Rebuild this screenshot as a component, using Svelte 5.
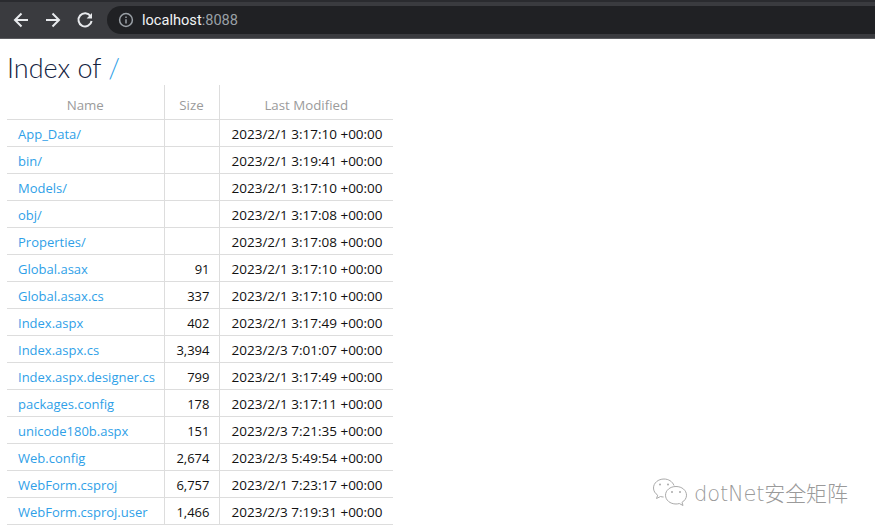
<script>
	let files = [
		{ name: "App_Data/", size: "", date: "2023/2/1 3:17:10 +00:00" },
		{ name: "bin/", size: "", date: "2023/2/1 3:19:41 +00:00" },
		{ name: "Models/", size: "", date: "2023/2/1 3:17:10 +00:00" },
		{ name: "obj/", size: "", date: "2023/2/1 3:17:08 +00:00" },
		{ name: "Properties/", size: "", date: "2023/2/1 3:17:08 +00:00" },
		{ name: "Global.asax", size: "91", date: "2023/2/1 3:17:10 +00:00" },
		{ name: "Global.asax.cs", size: "337", date: "2023/2/1 3:17:10 +00:00" },
		{ name: "Index.aspx", size: "402", date: "2023/2/1 3:17:49 +00:00" },
		{ name: "Index.aspx.cs", size: "3,394", date: "2023/2/3 7:01:07 +00:00" },
		{ name: "Index.aspx.designer.cs", size: "799", date: "2023/2/1 3:17:49 +00:00" },
		{ name: "packages.config", size: "178", date: "2023/2/1 3:17:11 +00:00" },
		{ name: "unicode180b.aspx", size: "151", date: "2023/2/3 7:21:35 +00:00" },
		{ name: "Web.config", size: "2,674", date: "2023/2/3 5:49:54 +00:00" },
		{ name: "WebForm.csproj", size: "6,757", date: "2023/2/1 7:23:17 +00:00" },
		{ name: "WebForm.csproj.user", size: "1,466", date: "2023/2/3 7:19:31 +00:00" },
	];
</script>

<div class="page">
	<div class="toolbar">
		<div class="nav">
			<svg width="18" height="18" viewBox="0 0 18 18"><path d="M16 9H3M9.500 2.500L3 9l6.500 6.500" /></svg>
			<svg width="18" height="18" viewBox="0 0 18 18"><path d="M2 9h13M8.500 2.500L15 9l-6.500 6.500" /></svg>
			<svg width="18" height="18" viewBox="0 0 18 18"><path d="M14.600 5.200A6.600 6.600 0 1 0 15.600 10" /><path class="fill" d="M16 2v5.400h-5.400z" /></svg>
		</div>
		<div class="address">
			<svg width="16" height="16" viewBox="0 0 16 16"><circle cx="8" cy="8" r="6.400" /><path d="M8 7.200v4.400M8 4.400v1.600" /></svg>
			<span class="host">localhost<span class="port">:8088</span></span>
		</div>
	</div>

	<div class="content">
		<h1>Index of <a href="#root">/</a></h1>
		<table>
			<thead>
				<tr>
					<th class="name">Name</th>
					<th class="size">Size</th>
					<th class="date">Last Modified</th>
				</tr>
			</thead>
			<tbody>
				{#each files as f}
					<tr>
						<td class="name"><a href="#file">{f.name}</a></td>
						<td class="size">{f.size}</td>
						<td class="date">{f.date}</td>
					</tr>
				{/each}
			</tbody>
		</table>
	</div>

	<div class="watermark">
		<svg width="36" height="30" viewBox="0 0 36 30">
			<path d="M22 8.500C20.500 4.500 16.500 2 12 2 6.200 2 1.500 6 1.500 11c0 3 1.700 5.500 4.200 7.200L4.500 21.500l4-2c1 .3 2 .5 3.100 .5" />
			<path d="M24 9.500c-6 0-10.500 3.900-10.500 8.700S18 27 24 27c1.200 0 2.300-.2 3.300-.5l3.700 2-1-3.200c2.800-1.600 4.500-4.200 4.500-7.100 0-4.800-4.500-8.700-10.500-8.700z" />
			<circle cx="8" cy="7.500" r="1" /><circle cx="16" cy="7.500" r="1" />
			<circle cx="20" cy="15" r="1" /><circle cx="28" cy="15" r="1" />
		</svg>
		<span>dotNet安全矩阵</span>
	</div>
</div>

<style>
	:global(body) {
		margin: 0;
		background: #fff;
	}
	.page {
		position: relative;
		width: 875px;
		height: 532px;
		overflow: hidden;
		font-family: "Open Sans", "Noto Sans", sans-serif;
	}
	.toolbar {
		height: 39px;
		box-sizing: border-box;
		background: #3a3b3f;
		border-top: 2px solid #2a2b2f;
		border-bottom: 1px solid #5a5b5f;
		display: flex;
		align-items: center;
		padding-left: 12px;
	}
	.nav {
		display: flex;
		gap: 14px;
	}
	.nav svg path {
		fill: none;
		stroke: #e8eaed;
		stroke-width: 2;
	}
	.nav svg path.fill {
		fill: #e8eaed;
		stroke: none;
	}
	.address {
		margin-left: 13px;
		flex: 1;
		height: 28px;
		background: #202124;
		border-radius: 14px 0 0 14px;
		display: flex;
		align-items: center;
		gap: 8px;
		padding-left: 11px;
	}
	.address svg circle,
	.address svg path {
		fill: none;
		stroke: #9aa0a6;
		stroke-width: 1.500;
	}
	.host {
		color: #f1f3f4;
		font-size: 14.600px;
		font-family: "Roboto", sans-serif;
	}
	.port {
		color: #9aa0a6;
	}
	.content {
		padding-left: 7px;
	}
	h1 {
		margin: 0;
		height: 46px;
		line-height: 57px;
		font-size: 27px;
		font-weight: 300;
		font-family: "Lato", sans-serif;
		color: #14233f;
	}
	h1 a,
	td a {
		color: #2f9fe8;
		text-decoration: none;
	}
	table {
		border-collapse: collapse;
		width: 386px;
		table-layout: fixed;
		font-size: 13px;
	}
	th {
		height: 34px;
		padding: 6px 0 0;
		box-sizing: border-box;
		font-weight: 400;
		font-size: 13.300px;
		text-align: center;
		color: #9b9b9b;
		border-bottom: 1px solid #ddd;
	}
	td {
		height: 27px;
		padding: 2px 0 0;
		color: #111;
		border-bottom: 1px solid #ddd;
		box-sizing: border-box;
	}
	.name {
		width: 157px;
		border-right: 1px solid #ddd;
	}
	td.name {
		padding-left: 11px;
	}
	.size {
		width: 55px;
		border-right: 1px solid #ddd;
	}
	td.size {
		text-align: right;
		padding-right: 9px;
	}
	td.date {
		padding-left: 12px;
		white-space: nowrap;
		font-size: 13.500px;
	}
	.watermark {
		position: absolute;
		left: 652px;
		top: 477px;
		display: flex;
		align-items: center;
		gap: 6px;
		color: #9a9a9a;
		font-size: 21px;
		letter-spacing: -0.150px;
		font-family: "DejaVu Sans", "Noto Sans CJK SC", sans-serif;
		font-weight: 300;
	}
	.watermark svg path {
		fill: #fff;
		stroke: #aaa;
		stroke-width: 1;
	}
	.watermark svg circle {
		fill: #aaa;
	}
</style>
